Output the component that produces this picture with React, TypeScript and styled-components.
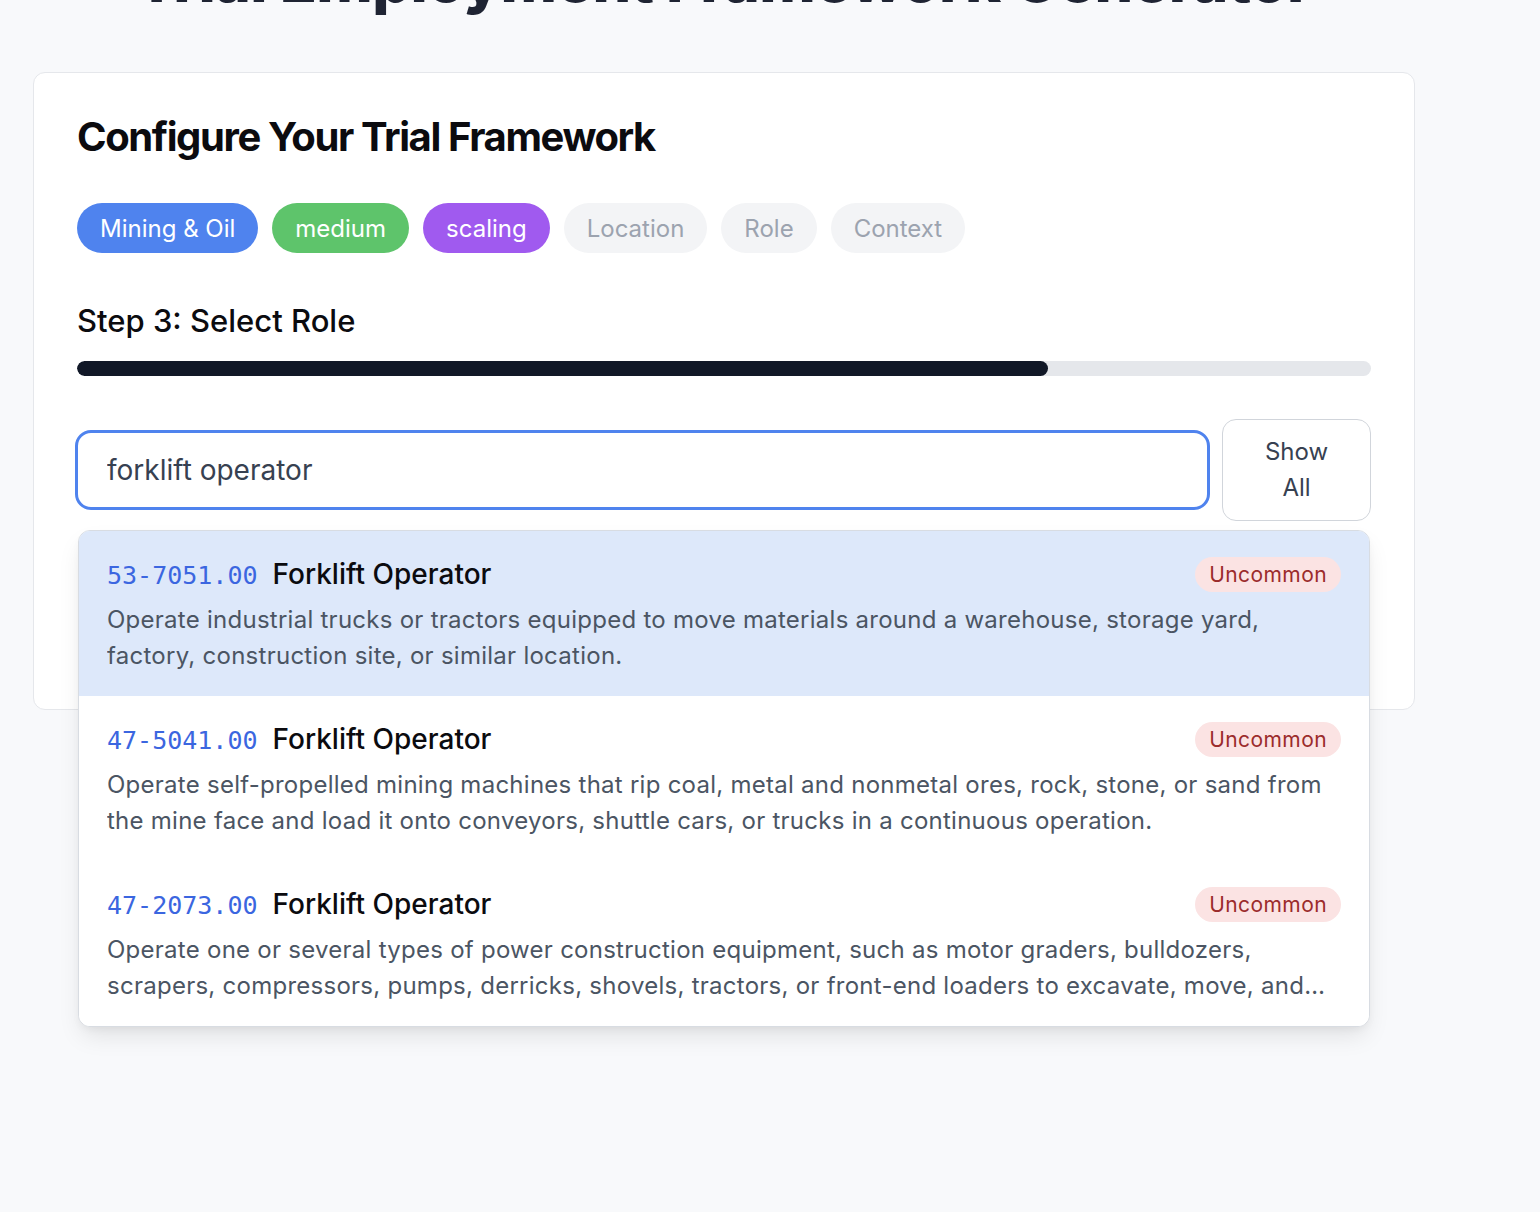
import React, { useEffect, useRef } from "react";
import styled, { createGlobalStyle } from "styled-components";

const GlobalStyle = createGlobalStyle`
  html, body { margin: 0; padding: 0; background: #f8f9fb; }
  body { font-family: Inter, "Noto Sans", "Liberation Sans", sans-serif; color: #111827; }
  * { box-sizing: border-box; }
`;

const Page = styled.div`
  width: 1382px;
  margin-left: 33px;
  min-height: 1212px;
  padding-top: 1px;
`;

const PageTitle = styled.h1`
  margin: -52px 0 61px;
  font-size: 61px;
  line-height: 62px;
  height: 62px;
  font-weight: 800;
  color: #1f2433;
  text-align: center;
  letter-spacing: -0.01em;
  white-space: nowrap;
`;

const Card = styled.section`
  background: #ffffff;
  border: 1px solid #e5e7eb;
  border-radius: 12px;
  padding: 38px 43px 188px;
`;

const Heading = styled.h2`
  margin: 0 0 40px;
  font-size: 40px;
  line-height: 52px;
  font-weight: 700;
  letter-spacing: -0.035em;
  color: #0b0b0f;
`;

const Pills = styled.div`
  display: flex;
  gap: 14px;
  margin-bottom: 48px;
`;

const Pill = styled.span<{ $bg: string; $fg: string }>`
  display: inline-flex;
  align-items: center;
  height: 50px;
  padding: 0 23px;
  border-radius: 25px;
  font-size: 24px;
  background: ${(p) => p.$bg};
  color: ${(p) => p.$fg};
`;

const StepTitle = styled.h3`
  margin: 0 0 20px;
  font-size: 31px;
  line-height: 40px;
  font-weight: 500;
  letter-spacing: 0;
  color: #0b0b0f;
`;

const Track = styled.div`
  height: 15px;
  border-radius: 8px;
  background: #e5e7eb;
  overflow: hidden;
  margin-bottom: 43px;
`;

const Fill = styled.div`
  height: 100%;
  background: #111827;
  border-radius: 8px;
`;

const SearchArea = styled.div`
  position: relative;
`;

const SearchRow = styled.div`
  display: flex;
  align-items: center;
  gap: 12px;
`;

const SearchInput = styled.input`
  flex: 1;
  height: 80px;
  margin-left: -2px;
  padding: 0 29px;
  border: 3px solid #4f83ee;
  border-radius: 16px;
  font-family: Inter, "Noto Sans", sans-serif;
  font-size: 28px;
  color: #374151;
  outline: none;
  background: #fff;
  caret-color: #111827;
`;

const ShowAll = styled.button`
  width: 149px;
  height: 102px;
  border: 1px solid #d1d5db;
  border-radius: 14px;
  background: #fff;
  font-family: Inter, "Noto Sans", sans-serif;
  font-size: 24px;
  line-height: 36px;
  color: #374151;
  padding: 0 30px;
`;

const Dropdown = styled.ul`
  position: absolute;
  top: calc(100% + 9px);
  left: 1px;
  right: 1px;
  margin: 0;
  padding: 0;
  list-style: none;
  background: #fff;
  border: 1px solid #d8dce2;
  border-radius: 12px;
  overflow: hidden;
  box-shadow: 0 12px 24px -4px rgba(0, 0, 0, 0.1), 0 4px 8px -2px rgba(0, 0, 0, 0.05);
`;

const Item = styled.li<{ $active?: boolean }>`
  height: 165px;
  padding: 23px 28px 0 28px;
  background: ${(p) => (p.$active ? "#dde8fa" : "#ffffff")};
`;

const ItemHead = styled.div`
  display: flex;
  align-items: center;
  justify-content: space-between;
  height: 40px;
  margin-bottom: 8px;
`;

const ItemTitle = styled.div`
  display: flex;
  align-items: baseline;
  gap: 15px;
`;

const Code = styled.span`
  font-family: "DejaVu Sans Mono", "Liberation Mono", monospace;
  font-size: 25px;
  color: #3b66e0;
`;

const Name = styled.span`
  font-size: 28px;
  font-weight: 500;
  color: #0b0b0f;
`;

const Badge = styled.span`
  display: inline-flex;
  align-items: center;
  height: 35px;
  padding: 0 14px;
  border-radius: 18px;
  background: #fbe3e3;
  color: #9b2c2c;
  font-size: 21px;
  letter-spacing: 0.02em;
`;

const Desc = styled.p`
  margin: 0;
  font-size: 24px;
  line-height: 36px;
  letter-spacing: 0.26px;
  color: #4b5563;
  display: -webkit-box;
  -webkit-line-clamp: 2;
  -webkit-box-orient: vertical;
  overflow: hidden;
  padding-right: 2px;
`;

const pills = [
  { label: "Mining & Oil", bg: "#4f83ee", fg: "#ffffff" },
  { label: "medium", bg: "#5ec46b", fg: "#ffffff" },
  { label: "scaling", bg: "#a05aef", fg: "#ffffff" },
  { label: "Location", bg: "#f3f4f6", fg: "#9ca3af" },
  { label: "Role", bg: "#f3f4f6", fg: "#9ca3af" },
  { label: "Context", bg: "#f3f4f6", fg: "#9ca3af" },
];

const results = [
  {
    code: "53-7051.00",
    desc: "Operate industrial trucks or tractors equipped to move materials around a warehouse, storage yard, factory, construction site, or similar location.",
  },
  {
    code: "47-5041.00",
    desc: "Operate self-propelled mining machines that rip coal, metal and nonmetal ores, rock, stone, or sand from the mine face and load it onto conveyors, shuttle cars, or trucks in a continuous operation.",
  },
  {
    code: "47-2073.00",
    desc: "Operate one or several types of power construction equipment, such as motor graders, bulldozers, scrapers, compressors, pumps, derricks, shovels, tractors, or front-end loaders to excavate, move, and grade earth, erect structures, or pour concrete or other hard surface pavement.",
  },
];

export default function App() {
  const inputRef = useRef<HTMLInputElement>(null);
  useEffect(() => {
    const el = inputRef.current;
    if (el) {
      el.focus();
      const n = el.value.length;
      el.setSelectionRange(n, n);
    }
  }, []);

  return (
    <>
      <GlobalStyle />
      <Page>
        <PageTitle>Trial Employment Framework Generator</PageTitle>
        <Card>
          <Heading>Configure Your Trial Framework</Heading>
          <Pills>
            {pills.map((p) => (
              <Pill key={p.label} $bg={p.bg} $fg={p.fg}>
                {p.label}
              </Pill>
            ))}
          </Pills>
          <StepTitle>Step 3: Select Role</StepTitle>
          <Track>
            <Fill style={{ width: "75%" }} />
          </Track>
          <SearchArea>
            <SearchRow>
              <SearchInput ref={inputRef} defaultValue="forklift operator" />
              <ShowAll>Show All</ShowAll>
            </SearchRow>
            <Dropdown>
              {results.map((r, i) => (
                <Item key={r.code} $active={i === 0}>
                  <ItemHead>
                    <ItemTitle>
                      <Code>{r.code}</Code>
                      <Name>Forklift Operator</Name>
                    </ItemTitle>
                    <Badge>Uncommon</Badge>
                  </ItemHead>
                  <Desc>{r.desc}</Desc>
                </Item>
              ))}
            </Dropdown>
          </SearchArea>
        </Card>
      </Page>
    </>
  );
}
